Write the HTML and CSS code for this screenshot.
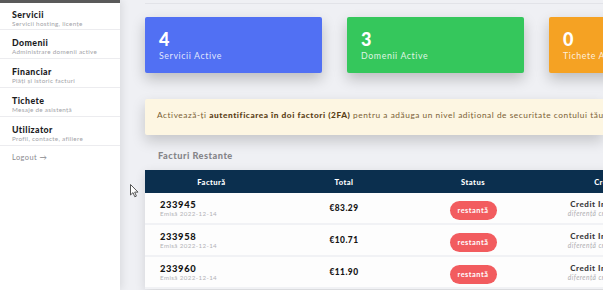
FILE: index.html
```html
<!DOCTYPE html>
<html>
<head>
    <title>Panou Client</title>
    <link rel="stylesheet" href="styles.css">
</head>
<body>
    <div class="layout">
        <aside class="sidebar">
            <a class="nav-item" href="#">
                <span class="nav-title">Servicii</span>
                <span class="nav-sub">Servicii hosting, licențe</span>
            </a>
            <a class="nav-item" href="#">
                <span class="nav-title">Domenii</span>
                <span class="nav-sub">Administrare domenii active</span>
            </a>
            <a class="nav-item" href="#">
                <span class="nav-title">Financiar</span>
                <span class="nav-sub">Plăți și istoric facturi</span>
            </a>
            <a class="nav-item" href="#">
                <span class="nav-title">Tichete</span>
                <span class="nav-sub">Mesaje de asistență</span>
            </a>
            <a class="nav-item" href="#">
                <span class="nav-title">Utilizator</span>
                <span class="nav-sub">Profil, contacte, afiliere</span>
            </a>
            <a class="logout" href="#">Logout &rarr;</a>
        </aside>

        <main class="main">
            <div class="topbar"></div>

            <div class="stats">
                <div class="stat blue">
                    <div class="stat-num">4</div>
                    <div class="stat-label">Servicii Active</div>
                </div>
                <div class="stat green">
                    <div class="stat-num">3</div>
                    <div class="stat-label">Domenii Active</div>
                </div>
                <div class="stat orange">
                    <div class="stat-num">0</div>
                    <div class="stat-label">Tichete Active</div>
                </div>
            </div>

            <div class="alert">
                Activează-ți <b>autentificarea în doi factori (2FA)</b> pentru a adăuga un nivel adițional de securitate contului tău.
            </div>

            <h3 class="section-title">Facturi Restante</h3>

            <table class="invoices">
                <colgroup>
                    <col style="width:133px">
                    <col style="width:132px">
                    <col style="width:126px">
                    <col style="width:140px">
                    <col style="width:130px">
                </colgroup>
                <thead>
                    <tr>
                        <th>Factură</th>
                        <th>Total</th>
                        <th>Status</th>
                        <th>Credit</th>
                        <th>Acțiuni</th>
                    </tr>
                </thead>
                <tbody>
                    <tr>
                        <td class="inv"><strong>233945</strong><span>Emisă 2022-12-14</span></td>
                        <td class="total">€83.29</td>
                        <td><span class="pill">restantă</span></td>
                        <td class="credit"><strong>Credit Insuficient</strong><em>diferență credit: €83.29</em></td>
                        <td></td>
                    </tr>
                    <tr>
                        <td class="inv"><strong>233958</strong><span>Emisă 2022-12-14</span></td>
                        <td class="total">€10.71</td>
                        <td><span class="pill">restantă</span></td>
                        <td class="credit"><strong>Credit Insuficient</strong><em>diferență credit: €10.71</em></td>
                        <td></td>
                    </tr>
                    <tr>
                        <td class="inv"><strong>233960</strong><span>Emisă 2022-12-14</span></td>
                        <td class="total">€11.90</td>
                        <td><span class="pill">restantă</span></td>
                        <td class="credit"><strong>Credit Insuficient</strong><em>diferență credit: €11.90</em></td>
                        <td></td>
                    </tr>
                </tbody>
            </table>
        </main>
    </div>

    <svg class="cursor" width="9" height="14" viewBox="0 0 9 14">
        <path d="M0.5 0.5 L0.5 11 L3 8.6 L4.8 12.8 L6.4 12.1 L4.7 8.1 L8 8.1 Z" fill="#fff" stroke="#555" stroke-width="1"/>
    </svg>
</body>
</html>
```

FILE: styles.css
```css
:root {
    --bg: #eff0f4;
    --navy: #0b2f4e;
    --blue: #5170f3;
    --green: #35c75c;
    --orange: #f5a223;
    --red: #f25c5f;
}

html, body {
    margin: 0;
    height: 100%;
    overflow: hidden;
}

body {
    font-family: Lato, "Noto Sans", sans-serif;
    background: var(--bg);
    color: #222;
}

.layout {
    display: flex;
    height: 100%;
}

/* sidebar */
.sidebar {
    flex: 0 0 120px;
    background: #fff;
    border-top: 3px solid #5a5a5a;
    box-shadow: 2px 0 8px rgba(0,0,0,0.09);
    position: relative;
    z-index: 1;
}

.nav-item {
    display: flex;
    flex-direction: column;
    height: 29px;
    padding: 7px 0 0 12px;
    box-sizing: border-box;
    border-bottom: 1px solid #ececef;
    text-decoration: none;
}

.nav-item:first-child {
    height: 27px;
    padding-top: 6px;
}

.nav-title {
    font-size: 8.8px;
    font-weight: 900;
    letter-spacing: 0.4px;
    color: #1d1d1f;
    line-height: 11px;
}

.nav-sub {
    font-size: 6.3px;
    letter-spacing: 0.3px;
    color: #a3a3a8;
    line-height: 8px;
}

.logout {
    display: block;
    padding: 7px 0 0 12px;
    font-size: 7.4px;
    letter-spacing: 0.45px;
    color: #8a8a8e;
    text-decoration: none;
}

/* main */
.main {
    flex: 1;
    min-width: 0;
    padding-left: 25px;
}

.topbar {
    height: 3px;
    border-bottom: 1px solid #e2e3e8;
}

.stats {
    display: flex;
    gap: 25px;
    margin-top: 13px;
}

.stat {
    flex: 0 0 177px;
    height: 56px;
    box-sizing: border-box;
    padding: 11px 0 0 14px;
    border-radius: 2px;
    color: #fff;
    box-shadow: 0 6px 14px rgba(0,0,0,0.22);
}

.stat.blue { background: var(--blue); }
.stat.green { background: var(--green); }
.stat.orange { background: var(--orange); }

.stat-num {
    font-size: 18px;
    font-weight: 900;
    line-height: 22px;
}

.stat-label {
    font-size: 8.8px;
    letter-spacing: 0.6px;
    color: rgba(255,255,255,0.85);
    line-height: 11px;
}

.alert {
    margin-top: 26px;
    height: 36px;
    box-sizing: border-box;
    padding: 11px 0 0 12px;
    background: #fdf6e2;
    border-radius: 2px 0 0 2px;
    color: #7b5f35;
    font-size: 8.3px;
    letter-spacing: 0.55px;
    white-space: nowrap;
    box-shadow: 0 6px 14px rgba(0,0,0,0.18);
}

.alert b {
    color: #5a3e16;
    font-weight: 900;
}

.section-title {
    margin: 15px 0 0 13px;
    font-size: 9.2px;
    font-weight: 900;
    letter-spacing: 0.5px;
    color: #858589;
    line-height: 12px;
}

/* table */
.invoices {
    margin-top: 8px;
    table-layout: fixed;
    width: 661px;
    border-collapse: collapse;
    background: #fdfdfd;
    box-shadow: 0 3px 10px rgba(0,0,0,0.12);
}

.invoices th {
    height: 23px;
    padding: 0;
    background: var(--navy);
    color: #fff;
    font-size: 7.6px;
    font-weight: 900;
    letter-spacing: 0.45px;
    text-align: center;
}

.invoices td {
    height: 30px;
    padding: 0;
    border-bottom: 2px solid #f1f2f5;
    text-align: center;
    vertical-align: middle;
}

.invoices td.inv {
    text-align: left;
    padding-left: 15px;
}

.inv strong {
    display: block;
    font-size: 9.4px;
    font-weight: 900;
    letter-spacing: 0.6px;
    color: #141414;
    line-height: 11px;
}

.inv span {
    display: block;
    font-size: 6.2px;
    letter-spacing: 0.4px;
    color: #b2b2b6;
    line-height: 8px;
}

.total {
    font-size: 8.4px;
    font-weight: 900;
    letter-spacing: 0.45px;
    color: #141414;
}

.pill {
    display: inline-block;
    width: 47px;
    height: 19px;
    line-height: 19px;
    border-radius: 10px;
    background: var(--red);
    color: #fff;
    font-size: 7.4px;
    font-weight: 700;
    letter-spacing: 0.5px;
}

.credit strong {
    display: block;
    font-size: 8px;
    font-weight: 900;
    letter-spacing: 0.55px;
    color: #3a3a3c;
    line-height: 10px;
}

.credit em {
    display: block;
    font-size: 6.6px;
    letter-spacing: 0.45px;
    color: #adadb1;
    line-height: 9px;
}

.cursor {
    position: absolute;
    left: 130px;
    top: 184px;
}
```
